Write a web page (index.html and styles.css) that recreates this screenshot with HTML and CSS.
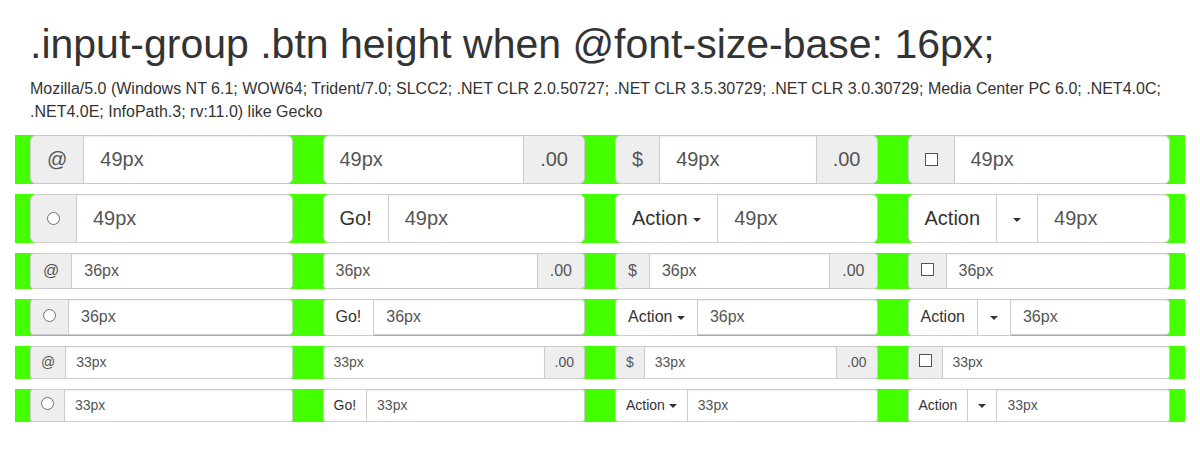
FILE: index.html
```html
<!DOCTYPE html>
<html lang="en">
<head>
<meta charset="utf-8">
<title>input-group btn height</title>
<link rel="stylesheet" href="styles.css">
</head>
<body>
<div class="page">
  <div class="intro">
    <h1 class="title">.input-group .btn height when @font-size-base: 16px;</h1>
    <p class="ua">Mozilla/5.0 (Windows NT 6.1; WOW64; Trident/7.0; SLCC2; .NET CLR 2.0.50727; .NET CLR 3.5.30729; .NET CLR 3.0.30729; Media Center PC 6.0; .NET4.0C; .NET4.0E; InfoPath.3; rv:11.0) like Gecko</p>
  </div>

  <div class="row size-lg">
    <div class="col"><div class="ig"><span class="addon first">@</span><input class="fc last" value="49px"></div></div>
    <div class="col"><div class="ig"><input class="fc first" value="49px"><span class="addon last">.00</span></div></div>
    <div class="col"><div class="ig"><span class="addon first">$</span><input class="fc" value="49px"><span class="addon last">.00</span></div></div>
    <div class="col"><div class="ig"><span class="addon first"><input type="checkbox" class="chk"></span><input class="fc last" value="49px"></div></div>
  </div>
  <div class="row size-lg">
    <div class="col"><div class="ig"><span class="addon first"><input type="radio" class="rad"></span><input class="fc last" value="49px"></div></div>
    <div class="col"><div class="ig"><button class="btn first">Go!</button><input class="fc last after-btn" value="49px"></div></div>
    <div class="col"><div class="ig"><button class="btn first">Action <span class="caret"></span></button><input class="fc last after-btn" value="49px"></div></div>
    <div class="col"><div class="ig"><button class="btn first">Action</button><button class="btn mid after-btn"><span class="caret"></span></button><input class="fc last after-btn" value="49px"></div></div>
  </div>

  <div class="row size-md">
    <div class="col"><div class="ig"><span class="addon first">@</span><input class="fc last" value="36px"></div></div>
    <div class="col"><div class="ig"><input class="fc first" value="36px"><span class="addon last">.00</span></div></div>
    <div class="col"><div class="ig"><span class="addon first">$</span><input class="fc" value="36px"><span class="addon last">.00</span></div></div>
    <div class="col"><div class="ig"><span class="addon first"><input type="checkbox" class="chk"></span><input class="fc last" value="36px"></div></div>
  </div>
  <div class="row size-md">
    <div class="col"><div class="ig"><span class="addon first"><input type="radio" class="rad"></span><input class="fc last" value="36px"></div></div>
    <div class="col"><div class="ig"><button class="btn first">Go!</button><input class="fc last after-btn" value="36px"></div></div>
    <div class="col"><div class="ig"><button class="btn first">Action <span class="caret"></span></button><input class="fc last after-btn" value="36px"></div></div>
    <div class="col"><div class="ig"><button class="btn first">Action</button><button class="btn mid after-btn"><span class="caret"></span></button><input class="fc last after-btn" value="36px"></div></div>
  </div>

  <div class="row size-sm">
    <div class="col"><div class="ig"><span class="addon first">@</span><input class="fc last" value="33px"></div></div>
    <div class="col"><div class="ig"><input class="fc first" value="33px"><span class="addon last">.00</span></div></div>
    <div class="col"><div class="ig"><span class="addon first">$</span><input class="fc" value="33px"><span class="addon last">.00</span></div></div>
    <div class="col"><div class="ig"><span class="addon first"><input type="checkbox" class="chk"></span><input class="fc last" value="33px"></div></div>
  </div>
  <div class="row size-sm">
    <div class="col"><div class="ig"><span class="addon first"><input type="radio" class="rad"></span><input class="fc last" value="33px"></div></div>
    <div class="col"><div class="ig"><button class="btn first">Go!</button><input class="fc last after-btn" value="33px"></div></div>
    <div class="col"><div class="ig"><button class="btn first">Action <span class="caret"></span></button><input class="fc last after-btn" value="33px"></div></div>
    <div class="col"><div class="ig"><button class="btn first">Action</button><button class="btn mid after-btn"><span class="caret"></span></button><input class="fc last after-btn" value="33px"></div></div>
  </div>
</div>
</body>
</html>
```

FILE: styles.css
```css
* { box-sizing: border-box; }

body {
  margin: 0;
  font-family: "Liberation Sans", Arial, Helvetica, sans-serif;
  font-size: 16px;
  line-height: 1.428571429;
  color: #333;
  background: #fff;
}

.page { padding: 0 15px; }

.intro { padding: 0 15px; }

.title {
  font-size: 41px;
  font-weight: 500;
  line-height: 1.1;
  margin: 22px 0 11px;
}

.ua { margin: 0 0 11px; }

.row {
  display: grid;
  grid-template-columns: repeat(4, 1fr);
  margin-bottom: 10px;
}

.col {
  background: #44ff00;
  padding: 0 15px;
}

.ig {
  display: flex;
  align-items: stretch;
  background: transparent;
}

.addon, .fc, .btn {
  font-family: inherit;
  font-size: inherit;
  margin: 0;
  border: 1px solid #ccc;
  border-radius: 0;
}

.addon {
  display: flex;
  align-items: center;
  justify-content: center;
  flex: none;
  background: #eee;
  color: #555;
  line-height: 1;
  white-space: nowrap;
}
.addon.first { border-right: 0; }
.addon.last { border-left: 0; }

.fc {
  flex: 1 1 auto;
  min-width: 0;
  width: 100%;
  color: #555;
  background: #fff;
  box-shadow: inset 0 1px 1px rgba(0, 0, 0, .075);
  outline: none;
}

.btn {
  flex: none;
  background: #fff;
  color: #333;
  white-space: nowrap;
  cursor: pointer;
}

.after-btn { margin-left: -1px; }

.caret {
  display: inline-block;
  width: 0;
  height: 0;
  vertical-align: middle;
  border-top: 4px solid #333;
  border-left: 4px solid transparent;
  border-right: 4px solid transparent;
}

.chk, .rad {
  -webkit-appearance: none;
  appearance: none;
  display: block;
  width: 13px;
  height: 13px;
  margin: 0;
  background: #fff;
}
.chk { border: 1px solid #555; }
.rad { border: 1px solid #707070; border-radius: 50%; }

/* sizes */
.size-lg { font-size: 20px; line-height: 1.3333333; }
.size-lg .addon, .size-lg .fc, .size-lg .btn { padding: 10px 16px; }
.size-lg .fc { height: 49px; line-height: 1.3333333; }
.size-lg .btn { line-height: 1.3333333; }
.size-lg .first { border-top-left-radius: 6px; border-bottom-left-radius: 6px; }
.size-lg .last { border-top-right-radius: 6px; border-bottom-right-radius: 6px; }

.size-md { font-size: 16px; line-height: 1.428571429; }
.size-md .addon, .size-md .fc, .size-md .btn { padding: 6px 12px; }
.size-md .fc { height: 36px; line-height: 1.428571429; }
.size-md .btn { line-height: 1.428571429; }
.size-md .first { border-top-left-radius: 4px; border-bottom-left-radius: 4px; }
.size-md .last { border-top-right-radius: 4px; border-bottom-right-radius: 4px; }
.size-md .chk, .size-md .rad { margin-bottom: 3px; }

.size-sm { font-size: 14px; line-height: 1.5; }
.size-sm .addon, .size-sm .fc, .size-sm .btn { padding: 5px 10px; }
.size-sm .fc { height: 33px; line-height: 1.5; }
.size-sm .btn { line-height: 1.5; }
.size-sm .first { border-top-left-radius: 3px; border-bottom-left-radius: 3px; }
.size-sm .last { border-top-right-radius: 3px; border-bottom-right-radius: 3px; }
.size-sm .chk, .size-sm .rad { margin-bottom: 4px; }
```
